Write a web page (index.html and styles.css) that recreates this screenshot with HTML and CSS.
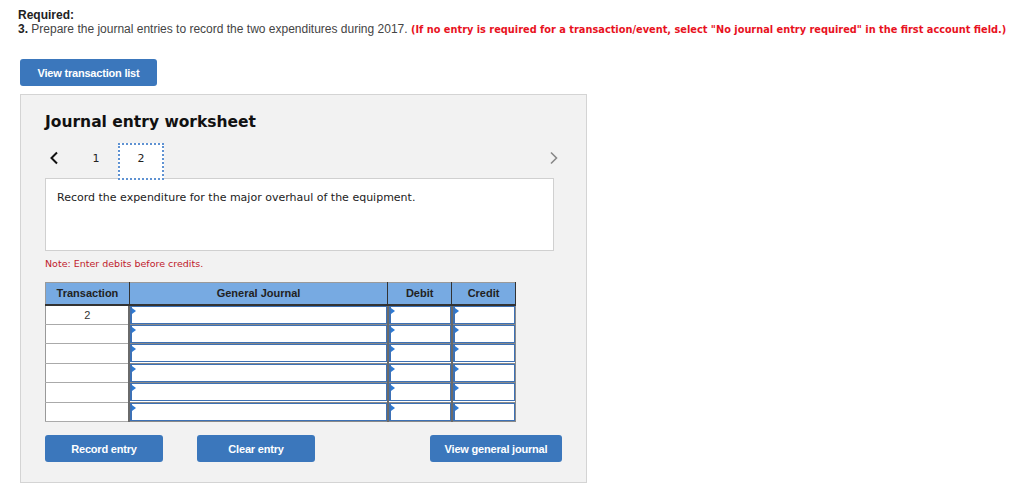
FILE: index.html
```html
<!DOCTYPE html>
<html>
<head>
<meta charset="utf-8">
<link rel="stylesheet" href="styles.css">
</head>
<body>
<div class="page">
  <div class="req">
    <div class="req-title">Required:</div>
    <div class="req-line"><b>3.</b> Prepare the journal entries to record the two expenditures during 2017. <span class="red">(If no entry is required for a transaction/event, select "No journal entry required" in the first account field.)</span></div>
  </div>
  <button class="btn btn-list">View transaction list</button>
  <div class="panel">
    <h2 class="title">Journal entry worksheet</h2>
    <div class="tabs">
      <span class="arrow left"><svg width="10" height="14" viewBox="0 0 10 14"><path d="M8 1.5 L2.5 7 L8 12.5" fill="none" stroke="#111" stroke-width="2"/></svg></span>
      <span class="tab">1</span>
      <span class="tab active">2</span>
      <span class="spacer"></span>
      <span class="arrow right"><svg width="10" height="14" viewBox="0 0 10 14"><path d="M2 1.5 L7.5 7 L2 12.5" fill="none" stroke="#888" stroke-width="1.6"/></svg></span>
    </div>
    <div class="desc">Record the expenditure for the major overhaul of the equipment.</div>
    <div class="note">Note: Enter debits before credits.</div>
    <table class="jtable">
      <thead>
        <tr><th class="c-tr">Transaction</th><th class="c-gj">General Journal</th><th class="c-dr">Debit</th><th class="c-cr">Credit</th></tr>
      </thead>
      <tbody>
        <tr><td class="tcell">2</td><td><div class="inp"></div></td><td><div class="inp"></div></td><td><div class="inp"></div></td></tr>
        <tr><td class="tcell"></td><td><div class="inp"></div></td><td><div class="inp"></div></td><td><div class="inp"></div></td></tr>
        <tr><td class="tcell"></td><td><div class="inp"></div></td><td><div class="inp"></div></td><td><div class="inp"></div></td></tr>
        <tr><td class="tcell"></td><td><div class="inp"></div></td><td><div class="inp"></div></td><td><div class="inp"></div></td></tr>
        <tr><td class="tcell"></td><td><div class="inp"></div></td><td><div class="inp"></div></td><td><div class="inp"></div></td></tr>
        <tr><td class="tcell"></td><td><div class="inp"></div></td><td><div class="inp"></div></td><td><div class="inp"></div></td></tr>
      </tbody>
    </table>
    <div class="actions">
      <button class="btn btn-act">Record entry</button>
      <button class="btn btn-act">Clear entry</button>
      <span class="spacer"></span>
      <button class="btn btn-view">View general journal</button>
    </div>
  </div>
</div>
</body>
</html>
```

FILE: styles.css
```css
* { box-sizing: border-box; }
html, body { margin: 0; padding: 0; background: #fff; }
body { font-family: "Liberation Sans", Arial, sans-serif; color: #333; }
.page { padding: 8px 0 0 20px; }
.req { margin-left: -2px; }
.req-title { font-size: 12px; font-weight: bold; line-height: 14px; color: #222; }
.req-line { font-size: 12px; line-height: 15px; color: #444; white-space: nowrap; }
.req-line b { color: #222; }
.red { color: #e8121e; font-family: "DejaVu Sans", Verdana, sans-serif; font-weight: bold; font-size: 9.8px; }
.btn {
  border: 0; border-radius: 3px; background: #3b77bc; color: #fff;
  font-family: "Liberation Sans", Arial, sans-serif; font-weight: bold; font-size: 11px;
  letter-spacing: -0.2px; cursor: pointer; padding: 0;
}
.btn-list { display: block; margin-top: 22px; width: 137px; height: 27px; }
.panel {
  margin-top: 8px; width: 567px; height: 389px;
  background: #f2f2f2; border: 1px solid #d4d4d4;
  padding: 0 0 0 24px;
}
.title {
  margin: 17px 0 0 0; font-family: "DejaVu Sans", Verdana, sans-serif; font-weight: bold;
  font-size: 15.5px; line-height: 20px; color: #111;
}
.tabs { position: relative; z-index: 1; display: flex; align-items: stretch; height: 37px; margin-top: 11px; width: 514px; }
.arrow { display: flex; align-items: center; padding-bottom: 8px; }
.arrow.left { padding-left: 4px; width: 38px; }
.tab { width: 46px; display: flex; align-items: center; justify-content: center; padding-bottom: 7px; font-family: "DejaVu Sans", Verdana, sans-serif; font-size: 11px; color: #222; }
.tab.active { background: #fff; border: 2px dotted #5f92d2; margin-left: 9px; }
.arrow.left + .tab { width: 26px; }
.spacer { flex: 1; }
.desc {
  margin-top: -2px;
  width: 509px; height: 73px; background: #fff; border: 1px solid #d0d0d0;
  padding: 12px 0 0 11px; font-family: "DejaVu Sans", Verdana, sans-serif; font-size: 11px; color: #222;
}
.note { margin-top: 6px; font-family: "DejaVu Sans", Verdana, sans-serif; font-size: 9.5px; color: #c0202c; height: 13px; line-height: 13px; }
.jtable { margin-top: 12px; border-collapse: collapse; width: 471px; }
.jtable th {
  background: #77aae2; height: 22px; font-size: 11px; font-weight: bold; color: #222;
  border: 1px solid #9a9a9a; border-bottom: 2px solid #333; border-right: 1px solid #333; padding: 0;
}
.c-tr { width: 84px; }
.c-gj { width: 259px; }
.c-dr { width: 64px; }
.c-cr { width: 64px; }
.jtable td { height: 19.5px; padding: 0; border: 1px solid #8a8a8a; background: #fff; }
.jtable td.tcell { text-align: center; font-size: 11px; color: #333; border-color: #999 #777 #aaa #999; vertical-align: top; padding-top: 3px; }
.jtable td + td { border-left: 2px solid #6a6a6a; }
.inp { position: relative; height: 18px; border: 1px solid #3d71b5; border-left: 2px solid #3d71b5; background: #fff; }
.inp::before { content: ""; position: absolute; left: 0; top: 1px; border-left: 4px solid #2e7ad3; border-top: 3px solid transparent; border-bottom: 3px solid transparent; }
.actions { display: flex; margin-top: 13px; width: 517px; }
.btn-act { width: 118px; height: 27px; margin-right: 34px; }
.btn-view { width: 132px; height: 27px; }
```
